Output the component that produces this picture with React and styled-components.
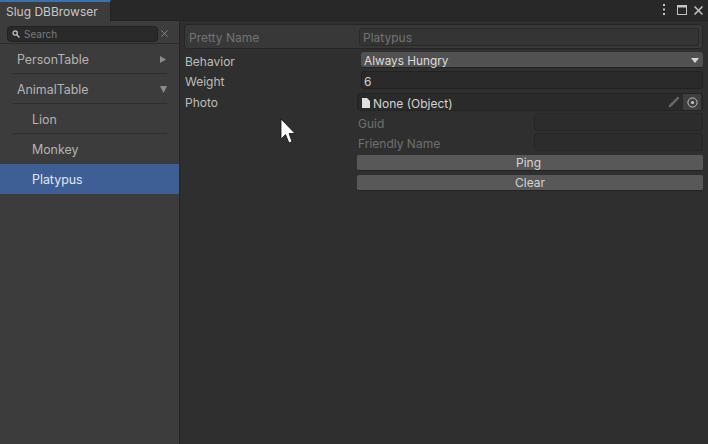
import React from 'react';
import styled, { createGlobalStyle } from 'styled-components';

const GlobalStyle = createGlobalStyle`
  html, body {
    margin: 0;
    padding: 0;
    background: #2f2f2f;
    overflow: hidden;
  }
  * {
    box-sizing: border-box;
  }
`;

const Window = styled.div`
  position: relative;
  width: 708px;
  height: 444px;
  display: flex;
  flex-direction: column;
  font-family: Inter, "Liberation Sans", sans-serif;
  font-size: 12px;
  color: #c4c4c4;
  background: #2f2f2f;
  overflow: hidden;
`;

const TabBar = styled.div`
  height: 21px;
  flex: none;
  display: flex;
  justify-content: space-between;
  background: #282828;
  border-bottom: 1px solid #232323;
`;

const Tab = styled.div`
  width: 111px;
  height: 21px;
  padding-left: 6px;
  background: #3c3c3c;
  border-top: 2px solid #3a72b0;
  border-right: 1px solid #232323;
  color: #c8c8c8;
  font-size: 12px;
  line-height: 20px;
  white-space: nowrap;
`;

const WindowActions = styled.div`
  display: flex;
  align-items: center;
  height: 20px;
  padding-right: 5px;
  color: #c4c4c4;
`;

const KebabSlot = styled.span`
  display: flex;
  margin-right: 11px;
`;

const MaximizeSlot = styled.span`
  display: flex;
  margin-right: 7px;
`;

const Body = styled.div`
  flex: 1;
  display: flex;
  min-height: 0;
`;

const Sidebar = styled.div`
  width: 180px;
  flex: none;
  background: #3c3c3c;
  border-right: 1px solid #242424;
`;

const SearchRow = styled.div`
  height: 23px;
  display: flex;
  align-items: flex-start;
  padding: 5px 0 0 7px;
  border-bottom: 1px solid #2b2b2b;
`;

const SearchBox = styled.div`
  width: 151px;
  height: 16px;
  display: flex;
  align-items: center;
  gap: 3px;
  padding-left: 4px;
  background: #2a2a2a;
  border: 1px solid #212121;
  border-radius: 4px;
  color: #7a7a7a;
  font-size: 10px;
`;

const ClearSearch = styled.span`
  display: flex;
  margin: 4px 0 0 3px;
`;

const TreeRow = styled.div`
  position: relative;
  height: 30px;
  display: flex;
  align-items: center;
  justify-content: space-between;
  padding: 0 13px 0 ${(p) => (p.$child ? 32 : 17)}px;
  font-size: 12.4px;
  color: ${(p) => (p.$selected ? '#e2e6ee' : '#b4b4b4')};
  background: ${(p) => (p.$selected ? '#3e5f96' : 'transparent')};

  ${(p) =>
    p.$divider &&
    `
    &::after {
      content: '';
      position: absolute;
      left: 13px;
      right: 12px;
      bottom: 0;
      height: 1px;
      background: #2d2d2d;
    }
  `}
`;

const Main = styled.div`
  flex: 1;
  padding: 3px 5px 0 4px;
  min-width: 0;
`;

const PrettyBox = styled.div`
  height: 25px;
  display: flex;
  align-items: center;
  justify-content: space-between;
  padding: 0 3px 0 4px;
  margin-bottom: 3px;
  background: #383838;
  border: 1px solid #262626;
  border-radius: 3px;
  color: #737373;
`;

const PrettyLabel = styled.span`
  padding-top: 2px;
`;

const PrettyField = styled.div`
  width: 340px;
  height: 18px;
  padding-left: 3px;
  line-height: 18px;
  background: #343434;
  border: 1px solid #2a2a2a;
  border-radius: 3px;
  color: #737373;
`;

const PropRow = styled.div`
  display: flex;
  align-items: center;
  justify-content: space-between;
  height: ${(p) => p.$height}px;
  margin-top: ${(p) => p.$top || 0}px;
  padding-left: 1px;
`;

const PropLabel = styled.div`
  padding-top: ${(p) => (p.$flush ? 0 : 2)}px;
  color: #bdbdbd;
`;

const Dropdown = styled.div`
  width: 342px;
  height: 16px;
  display: flex;
  align-items: center;
  justify-content: space-between;
  padding: 2px 4px 0 3px;
  background: #515151;
  border-bottom: 1px solid #242424;
  border-radius: 3px;
  color: #dcdcdc;
  font-size: 11.8px;
`;

const NumberField = styled.div`
  width: 342px;
  height: 18px;
  padding-left: 2px;
  line-height: 19px;
  background: #2a2a2a;
  border: 1px solid #212121;
  border-radius: 3px;
  color: #d2d2d2;
`;

const ObjectField = styled.div`
  width: 346px;
  height: 18px;
  display: flex;
  align-items: center;
  padding-left: 4px;
  background: #2a2a2a;
  border: 1px solid #232323;
  border-radius: 3px;
  color: #d2d2d2;
`;

const ObjectName = styled.span`
  display: flex;
  align-items: center;
  gap: 3px;
  padding-top: 2px;
`;

const ObjectActions = styled.div`
  margin-left: auto;
  display: flex;
  align-items: center;
  gap: 3px;
  height: 100%;
  padding-right: 1px;
`;

const PickerButton = styled.div`
  width: 18px;
  height: 100%;
  display: flex;
  align-items: center;
  justify-content: center;
  background: #3f3f3f;
`;

const SubRow = styled.div`
  display: flex;
  align-items: center;
  justify-content: space-between;
  height: 18px;
  margin: 2px 0 0 174px;
  color: #6f6f6f;
`;

const SubLabel = styled.span`
  padding-top: 2px;
`;

const SubField = styled.div`
  width: 169px;
  height: 18px;
  background: #2c2c2c;
  border: 1px solid #262626;
  border-radius: 3px;
`;

const ActionButton = styled.div`
  height: 16px;
  margin: 4px 0 0 173px;
  padding-left: ${(p) => p.$pad}px;
  background: #585858;
  border-bottom: 1px solid #232323;
  border-radius: 2px;
  color: #d4d4d4;
  line-height: 15px;
`;

const Cursor = styled.svg`
  position: absolute;
  left: 280px;
  top: 118px;
`;

const KebabIcon = () => (
  <svg width="4" height="12" viewBox="0 0 4 12" fill="#c4c4c4">
    <rect x="1" y="0" width="2" height="2" />
    <rect x="1" y="4.5" width="2" height="2" />
    <rect x="1" y="9" width="2" height="2" />
  </svg>
);

const MaximizeIcon = () => (
  <svg width="10" height="10" viewBox="0 0 10 10" fill="none" stroke="#c4c4c4">
    <rect x="0.5" y="0.5" width="9" height="9" />
    <rect x="0.5" y="0.5" width="9" height="1.5" fill="#c4c4c4" />
  </svg>
);

const CloseIcon = ({ size = 9, color = '#c4c4c4', width = 1.5 }) => (
  <svg width={size} height={size} viewBox="0 0 9 9" stroke={color} strokeWidth={width}>
    <path d="M0.5 0.5 L8.5 8.5 M8.5 0.5 L0.5 8.5" />
  </svg>
);

const SearchIcon = () => (
  <svg width="8" height="8" viewBox="0 0 9 9" fill="none" stroke="#c8c8c8" strokeWidth="1.4" style={{ flex: 'none', marginRight: 1 }}>
    <circle cx="3.5" cy="3.5" r="2.4" />
    <path d="M5.4 5.4 L8.4 8.4" />
  </svg>
);

const ArrowRight = () => (
  <svg width="6" height="7" viewBox="0 0 6 7" fill="#8c8c8c">
    <path d="M0 0 L6 3.5 L0 7 Z" />
  </svg>
);

const ArrowDown = () => (
  <svg width="7" height="7" viewBox="0 0 7 7" fill="#8c8c8c" style={{ marginRight: -1 }}>
    <path d="M0 0 L7 0 L3.5 7 Z" />
  </svg>
);

const DropdownArrow = () => (
  <svg width="8" height="5" viewBox="0 0 8 5" fill="#d8d8d8">
    <path d="M0 0 L8 0 L4 5 Z" />
  </svg>
);

const FileIcon = () => (
  <svg width="8" height="10" viewBox="0 0 8 10" fill="#e0e0e0" style={{ flex: 'none' }}>
    <path d="M0 0 L5 0 L8 3 L8 10 L0 10 Z" />
  </svg>
);

const PencilIcon = () => (
  <svg width="12" height="12" viewBox="0 0 12 12" stroke="#666666" fill="none">
    <path d="M1 11 L2 8.5 L9.8 1 L11 2.2 L3.5 10 Z" fill="#666666" />
  </svg>
);

const TargetIcon = () => (
  <svg width="11" height="11" viewBox="0 0 11 11" fill="none" stroke="#c4c4c4">
    <circle cx="5.5" cy="5.5" r="4.6" />
    <circle cx="5.5" cy="5.5" r="1.6" fill="#c4c4c4" stroke="none" />
  </svg>
);

const CursorIcon = () => (
  <Cursor width="16" height="27" viewBox="0 0 16 27">
    <path d="M1 1 L1 21 L5.5 16.5 L9 25 L12 23.5 L9 15.5 L15 15.5 Z" fill="#fff" stroke="#111" strokeWidth="0.8" />
  </Cursor>
);

export default function App() {
  return (
    <Window>
      <GlobalStyle />
      <TabBar>
        <Tab>Slug DBBrowser</Tab>
        <WindowActions>
          <KebabSlot>
            <KebabIcon />
          </KebabSlot>
          <MaximizeSlot>
            <MaximizeIcon />
          </MaximizeSlot>
          <CloseIcon />
        </WindowActions>
      </TabBar>
      <Body>
        <Sidebar>
          <SearchRow>
            <SearchBox>
              <SearchIcon />
              Search
            </SearchBox>
            <ClearSearch>
              <CloseIcon size={7} color="#9a9a9a" width={1} />
            </ClearSearch>
          </SearchRow>
          <TreeRow $divider>
            PersonTable
            <ArrowRight />
          </TreeRow>
          <TreeRow $divider>
            AnimalTable
            <ArrowDown />
          </TreeRow>
          <TreeRow $child $divider>Lion</TreeRow>
          <TreeRow $child>Monkey</TreeRow>
          <TreeRow $child $selected>Platypus</TreeRow>
        </Sidebar>
        <Main>
          <PrettyBox>
            <PrettyLabel>Pretty Name</PrettyLabel>
            <PrettyField>Platypus</PrettyField>
          </PrettyBox>
          <PropRow $height={16}>
            <PropLabel>Behavior</PropLabel>
            <Dropdown>
              Always Hungry
              <DropdownArrow />
            </Dropdown>
          </PropRow>
          <PropRow $height={18} $top={3}>
            <PropLabel>Weight</PropLabel>
            <NumberField>6</NumberField>
          </PropRow>
          <PropRow $height={18} $top={4}>
            <PropLabel $flush>Photo</PropLabel>
            <ObjectField>
              <ObjectName>
                <FileIcon />
                None (Object)
              </ObjectName>
              <ObjectActions>
                <PencilIcon />
                <PickerButton>
                  <TargetIcon />
                </PickerButton>
              </ObjectActions>
            </ObjectField>
          </PropRow>
          <SubRow>
            <SubLabel>Guid</SubLabel>
            <SubField />
          </SubRow>
          <SubRow>
            <SubLabel>Friendly Name</SubLabel>
            <SubField />
          </SubRow>
          <ActionButton $pad={159}>Ping</ActionButton>
          <ActionButton $pad={158}>Clear</ActionButton>
        </Main>
      </Body>
      <CursorIcon />
    </Window>
  );
}
